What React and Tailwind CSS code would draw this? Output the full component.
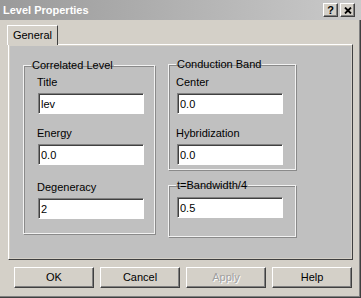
import React from "react";

const font = { fontFamily: '"Liberation Sans", Arial, sans-serif' };

const inputCls =
  "block w-[106px] h-[21px] bg-white border-t border-l border-[#808080] border-r border-b border-r-white border-b-white shadow-[inset_1px_1px_0_#404040] pl-[2px] text-[11px] text-black outline-none";

const Field = ({ label, value, gap = "mt-[12px]" }) => (
  <div className={gap}>
    <div className="h-[14px] leading-[14px] text-[11px] text-black">{label}</div>
    <input readOnly value={value} className={`mt-[4px] ml-px ${inputCls}`} style={font} />
  </div>
);

const Group = ({ title, className, bodyClass, children }) => (
  <fieldset className={`border border-[#f2f2f2] shadow-[inset_1px_1px_0_#8a8a8a,1px_1px_0_#8a8a8a] ${className}`}>
    <legend className="ml-[7px] px-px h-[14px] leading-[14px] text-[11px] text-black">{title}</legend>
    <div className={bodyClass}>{children}</div>
  </fieldset>
);

const Button = ({ children, disabled }) => (
  <button
    className={`w-[80px] h-[21px] bg-[#d4d0c8] border-t border-l border-white border-r border-b border-r-[#404040] border-b-[#404040] shadow-[inset_-1px_-1px_0_#808080] text-[11px] ${
      disabled ? "text-[#a0a0a0] [text-shadow:1px_1px_0_#ffffff]" : "text-black"
    }`}
    style={font}
  >
    {children}
  </button>
);

const CaptionButton = ({ children }) => (
  <div className="w-[15px] h-[14px] flex items-center justify-center bg-[#d4d0c8] border-t border-l border-white border-r border-b border-r-[#404040] border-b-[#404040] shadow-[inset_-1px_-1px_0_#808080]">
    {children}
  </div>
);

export default function App() {
  return (
    <div
      className="w-[361px] h-[298px] bg-[#d4d0c8] flex flex-col overflow-hidden shadow-[inset_-1px_-1px_0_#404040,inset_-2px_-2px_0_#808080]"
      style={font}
    >
      {/* title bar */}
      <div className="h-[20px] flex items-center px-[3px] bg-gradient-to-r from-[#9a9a9a] to-[#cacaca]">
        <span className="text-[11px] font-bold text-white">Level Properties</span>
        <div className="ml-auto flex gap-[2px] mr-[3px]">
          <CaptionButton>
            <span className="text-[11px] font-bold leading-none text-black">?</span>
          </CaptionButton>
          <CaptionButton>
            <svg width="8" height="7" viewBox="0 0 8 7">
              <path d="M1 0.5 L7 6.5 M7 0.5 L1 6.5" stroke="#000" strokeWidth="1.8" />
            </svg>
          </CaptionButton>
        </div>
      </div>

      {/* tabs */}
      <div className="pl-[7px] pt-[5px]">
        <div className="relative z-10 -mb-px w-[51px] h-[20px] flex items-center justify-center bg-[#d4d0c8] border-t border-l border-white border-r border-r-[#404040] text-[11px] text-black">
          General
        </div>
      </div>

      {/* page */}
      <div className="ml-[8px] w-[345px] h-[216px] p-px bg-[#d4d0c8] border-t border-l border-white border-r border-b border-r-[#404040] border-b-[#404040]">
        <div className="h-full bg-[#c0c0c0] flex gap-[13px] pl-[13px] pt-[12px]">
          <Group title="Correlated Level" className="w-[132px] h-[176px]" bodyClass="pl-[13px] pt-[3px]">
            <Field label="Title" value="lev" gap="" />
            <Field label="Energy" value="0.0" />
            <Field label="Degeneracy" value="2" gap="mt-[15px]" />
          </Group>

          <div className="flex flex-col gap-[8px] -mt-px">
            <Group title="Conduction Band" className="w-[128px] h-[113px]" bodyClass="pl-[7px] pt-[4px]">
              <Field label="Center" value="0.0" gap="" />
              <Field label="Hybridization" value="0.0" />
            </Group>
            <Group title="t=Bandwidth/4" className="w-[128px] h-[59px]" bodyClass="pl-[8px] pt-[5px]">
              <input readOnly value="0.5" className={inputCls} style={font} />
            </Group>
          </div>
        </div>
      </div>

      {/* buttons */}
      <div className="flex gap-[6px] pl-[14px] mt-[7px]">
        <Button>OK</Button>
        <Button>Cancel</Button>
        <Button disabled>Apply</Button>
        <Button>Help</Button>
      </div>
    </div>
  );
}
